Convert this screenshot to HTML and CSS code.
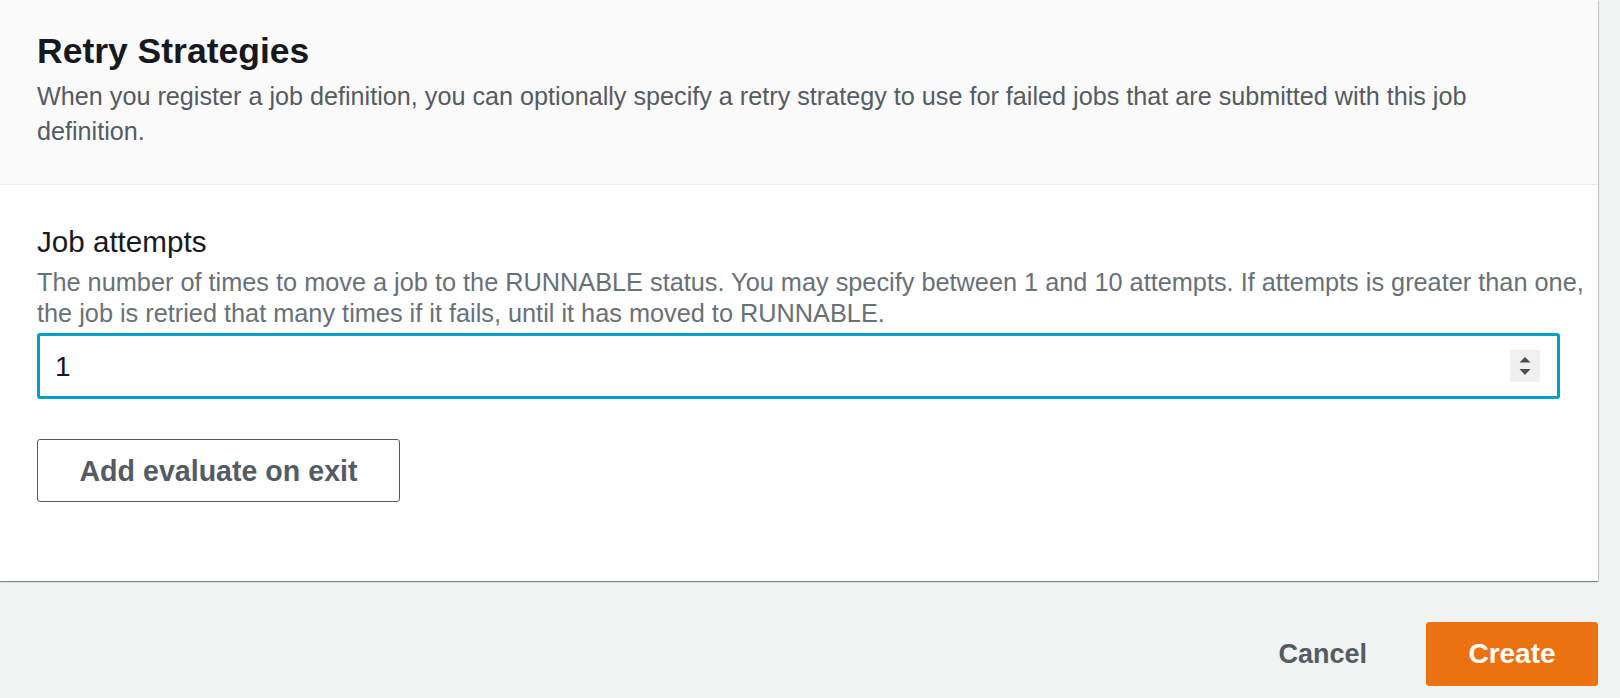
FILE: index.html
```html
<!DOCTYPE html>
<html lang="en">
<head>
<meta charset="utf-8">
<title>Retry Strategies</title>
<link rel="stylesheet" href="styles.css">
</head>
<body>
<div class="page">
  <section class="panel">
    <header class="panel-header">
      <h2 class="panel-title">Retry Strategies</h2>
      <p class="panel-desc">When you register a job definition, you can optionally specify a retry strategy to use for failed jobs that are submitted with this job definition.</p>
    </header>
    <div class="panel-body">
      <div class="field">
        <label class="field-label">Job attempts</label>
        <p class="field-desc">The number of times to move a job to the RUNNABLE status. You may specify between 1 and 10 attempts. If attempts is greater than one, the job is retried that many times if it fails, until it has moved to RUNNABLE.</p>
        <div class="number-input">
          <span class="number-value">1</span>
          <span class="spinner">
            <svg width="12" height="20" viewBox="0 0 12 20">
              <path d="M6 1 L11.5 6.5 L0.5 6.5 Z" fill="#4f4f4f"/>
              <path d="M6 19 L11.5 13 L0.5 13 Z" fill="#4f4f4f"/>
            </svg>
          </span>
        </div>
      </div>
      <button class="btn btn-normal">Add evaluate on exit</button>
    </div>
  </section>
  <footer class="actions">
    <button class="btn btn-link">Cancel</button>
    <button class="btn btn-primary">Create</button>
  </footer>
</div>
</body>
</html>
```

FILE: styles.css
```css
* {
  box-sizing: border-box;
}

html, body {
  margin: 0;
  padding: 0;
  background: #f2f3f3;
  font-family: "Liberation Sans", Arial, sans-serif;
  color: #16191f;
}

.page {
  width: 1620px;
  height: 698px;
  padding-right: 22px;
}

.panel {
  background: #ffffff;
  box-shadow: 0 1px 1px 0 rgba(0, 28, 36, 0.3), 1px 1px 1px 0 rgba(0, 28, 36, 0.15), -1px 1px 1px 0 rgba(0, 28, 36, 0.15);
}

.panel-header {
  background: #fafafa;
  border-bottom: 1px solid #eaeded;
  padding: 31px 0 0 37px;
  height: 185px;
}

.panel-title {
  margin: 0;
  font-size: 35.5px;
  line-height: 40px;
  font-weight: 700;
  color: #16191f;
}

.panel-desc {
  margin: 8px 0 0 0;
  max-width: 1470px;
  font-size: 25.2px;
  line-height: 35px;
  color: #545b64;
}

.panel-body {
  padding: 40px 0 79px 37px;
}

.field-label {
  display: block;
  font-size: 29.6px;
  line-height: 34px;
  color: #16191f;
}

.field-desc {
  margin: 8px 0 0 0;
  font-size: 25.3px;
  line-height: 31px;
  color: #687078;
}

.number-input {
  display: flex;
  align-items: center;
  width: calc(100% - 38px);
  height: 66px;
  margin-top: 4px;
  padding: 0 17px 0 15px;
  border: 3px solid #00a1c9;
  border-radius: 3px;
  background: #ffffff;
}

.number-value {
  font-size: 28px;
  line-height: 34px;
  padding-top: 2px;
  color: #16191f;
}

.spinner {
  margin-left: auto;
  width: 30px;
  height: 32px;
  background: #f0f0f0;
  display: flex;
  align-items: center;
  justify-content: center;
}

.spinner svg {
  display: block;
}

.btn {
  font-family: "Liberation Sans", Arial, sans-serif;
  font-weight: 700;
  font-size: 28px;
  line-height: 34px;
  cursor: pointer;
  border-radius: 3px;
}

.btn-normal {
  display: block;
  margin-top: 40px;
  width: 363px;
  height: 63px;
  font-size: 28.6px;
  background: #ffffff;
  color: #545b64;
  border: 1.5px solid #545b64;
  padding: 0;
}

.actions {
  display: flex;
  justify-content: flex-end;
  align-items: center;
  gap: 17px;
  padding-top: 41px;
}

.btn-link {
  background: transparent;
  border: none;
  color: #545b64;
  height: 64px;
  font-size: 27px;
  padding: 0 42px;
}

.btn-primary {
  background: #ec7211;
  border: 1px solid #ec7211;
  color: #ffffff;
  width: 172px;
  height: 64px;
  padding: 0;
}
```
